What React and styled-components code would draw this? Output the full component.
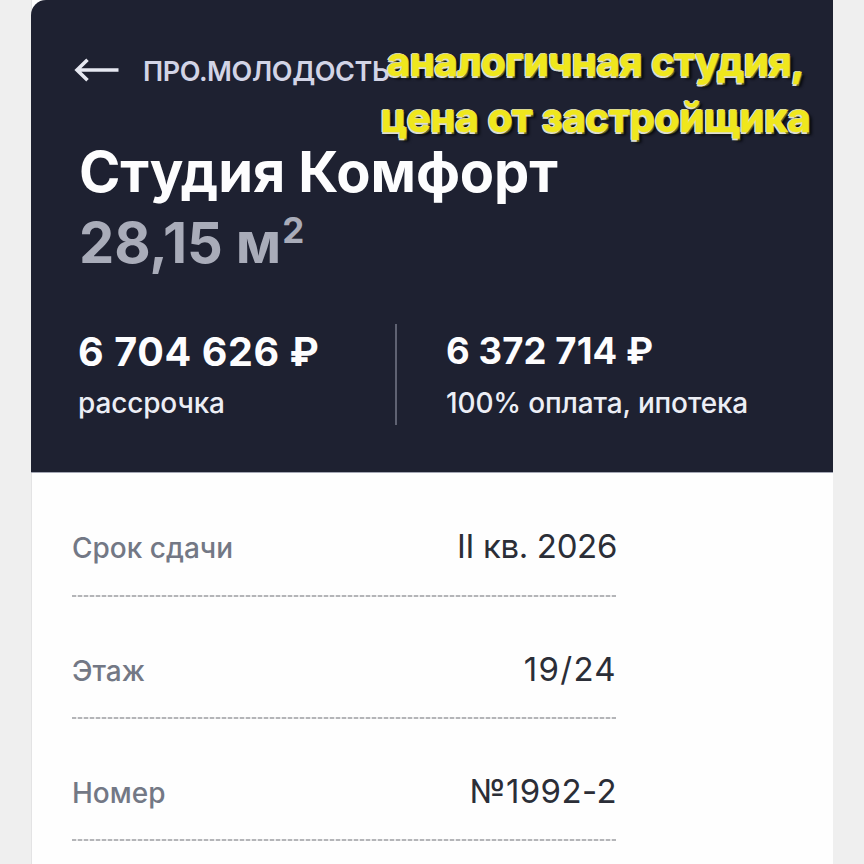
import React from 'react';
import styled, { createGlobalStyle } from 'styled-components';

const navy = '#1e2131';
const page_gray = '#efefef';

const GlobalStyle = createGlobalStyle`
  * {
    box-sizing: border-box;
  }
  body {
    margin: 0;
    background: ${page_gray};
    font-family: Inter, "Liberation Sans", sans-serif;
  }
`;

const Page = styled.div`
  position: relative;
  display: flex;
  height: 864px;
  padding: 0 31px;
  overflow: hidden;
`;

const Card = styled.main`
  flex: 1;
  background: #fefefe;
  box-shadow: inset 1px 0 0 #e3e3e4;
`;

const Header = styled.header`
  height: 473px;
  padding: 52px 43px 0;
  background: ${navy};
  border-bottom: 1px solid #a4a7b4;
  border-top-left-radius: 15px;
`;

const Crumb = styled.a`
  display: flex;
  align-items: center;
  gap: 23px;
  height: 40px;
  color: #d2d4e6;
  font-size: 27px;
  font-weight: 600;
  line-height: 40px;
  letter-spacing: -0.4px;
  white-space: nowrap;
`;

const Arrow = styled.svg`
  width: 46px;
  height: 26px;
  margin-top: -4px;
  fill: none;
  stroke: #e6e8f1;
  stroke-width: 3.6;
`;

const Title = styled.h1`
  margin: 45px 0 0 5px;
  color: #fdfdfe;
  font-size: 56px;
  font-weight: 700;
  line-height: 71px;
  letter-spacing: -0.1px;
`;

const Area = styled.span`
  display: block;
  color: #a9acb9;

  sup {
    position: relative;
    top: -20px;
    margin-left: 1px;
    font-size: 35px;
    line-height: 0;
    vertical-align: baseline;
  }
`;

const Prices = styled.div`
  display: flex;
  height: 101px;
  margin: 45px 0 0 4px;
`;

const Price = styled.div`
  display: flex;
  flex-direction: column;
  justify-content: flex-end;
  padding-bottom: 4px;
  white-space: nowrap;

  &:first-child {
    width: 319px;
    border-right: 2px solid #5f6272;
  }
  &:last-child {
    padding-left: 49px;
  }
`;

const Amount = styled.strong`
  color: #fdfdfe;
  font-size: ${({ $large }) => ($large ? 39.5 : 36.5)}px;
  font-weight: 700;
  line-height: 40px;
  letter-spacing: ${({ $large }) => ($large ? 0.6 : 0.1)}px;
  margin-bottom: ${({ $large }) => ($large ? 13 : 14)}px;
`;

const Terms = styled.span`
  color: #eceef5;
  font-size: 28px;
  font-weight: 500;
  line-height: 36px;
  letter-spacing: -0.15px;
`;

const Specs = styled.dl`
  width: 585px;
  margin: 0;
  padding: 2px 0 0 41px;
`;

const Row = styled.div`
  display: flex;
  align-items: baseline;
  justify-content: space-between;
  height: 122px;
  padding-top: 51px;
  background: repeating-linear-gradient(90deg, #b4b5b8 0 4px, #e9e9ea 4px 6px) bottom / 100% 2px no-repeat;

  & + & {
    padding-top: 52px;
  }
`;

const Label = styled.dt`
  color: #737885;
  font-size: 28px;
  font-weight: 450;
  line-height: 40px;
`;

const Value = styled.dd`
  margin: 0 -1px 0 0;
  color: #2b2e37;
  font-size: 33px;
  font-weight: 440;
  line-height: 40px;
  letter-spacing: ${({ $spacing }) => $spacing}px;
`;

const Caption = styled.div`
  position: absolute;
  top: 34px;
  left: 378px;
  width: 436px;
  color: #efe71d;
  font-size: 40px;
  font-weight: 700;
  line-height: 56px;
  text-align: center;
  white-space: nowrap;
  -webkit-text-stroke: 0.5px #efe71d;
  text-shadow: -2px 0 0 #dcdcd4, -1px -1px 0 #d0d0b8, -1.5px 1.5px 0 #dcdcd4, 1px 2px 1px #77751f, 3px 3px 3px #04050a;
`;

const CaptionLine = styled.span`
  display: block;
  letter-spacing: ${({ $spacing }) => $spacing}px;
`;

const specs = [
  { label: 'Срок сдачи', value: 'II кв. 2026', spacing: -0.35 },
  { label: 'Этаж', value: '19/24', spacing: 1.3 },
  { label: 'Номер', value: '№1992-2', spacing: 0.4 },
];

const App = () => (
  <>
    <GlobalStyle />
    <Page>
      <Card>
        <Header>
          <Crumb>
            <Arrow viewBox="0 0 46 26">
              <path d="M44.5 13H3M13.5 2.8 3 13l10.5 10.2" />
            </Arrow>
            ПРО.МОЛОДОСТЬ
          </Crumb>
          <Title>
            Студия Комфорт
            <Area>28,15 м<sup>2</sup></Area>
          </Title>
          <Prices>
            <Price>
              <Amount $large>6 704 626 ₽</Amount>
              <Terms>рассрочка</Terms>
            </Price>
            <Price>
              <Amount>6 372 714 ₽</Amount>
              <Terms>100% оплата, ипотека</Terms>
            </Price>
          </Prices>
        </Header>
        <Specs>
          {specs.map(({ label, value, spacing }) => (
            <Row key={label}>
              <Label>{label}</Label>
              <Value $spacing={spacing}>{value}</Value>
            </Row>
          ))}
        </Specs>
      </Card>
      <Caption>
        <CaptionLine $spacing={-0.3}>аналогичная студия,</CaptionLine>
        <CaptionLine $spacing={-0.1}>цена от застройщика</CaptionLine>
      </Caption>
    </Page>
  </>
);

export default App;
